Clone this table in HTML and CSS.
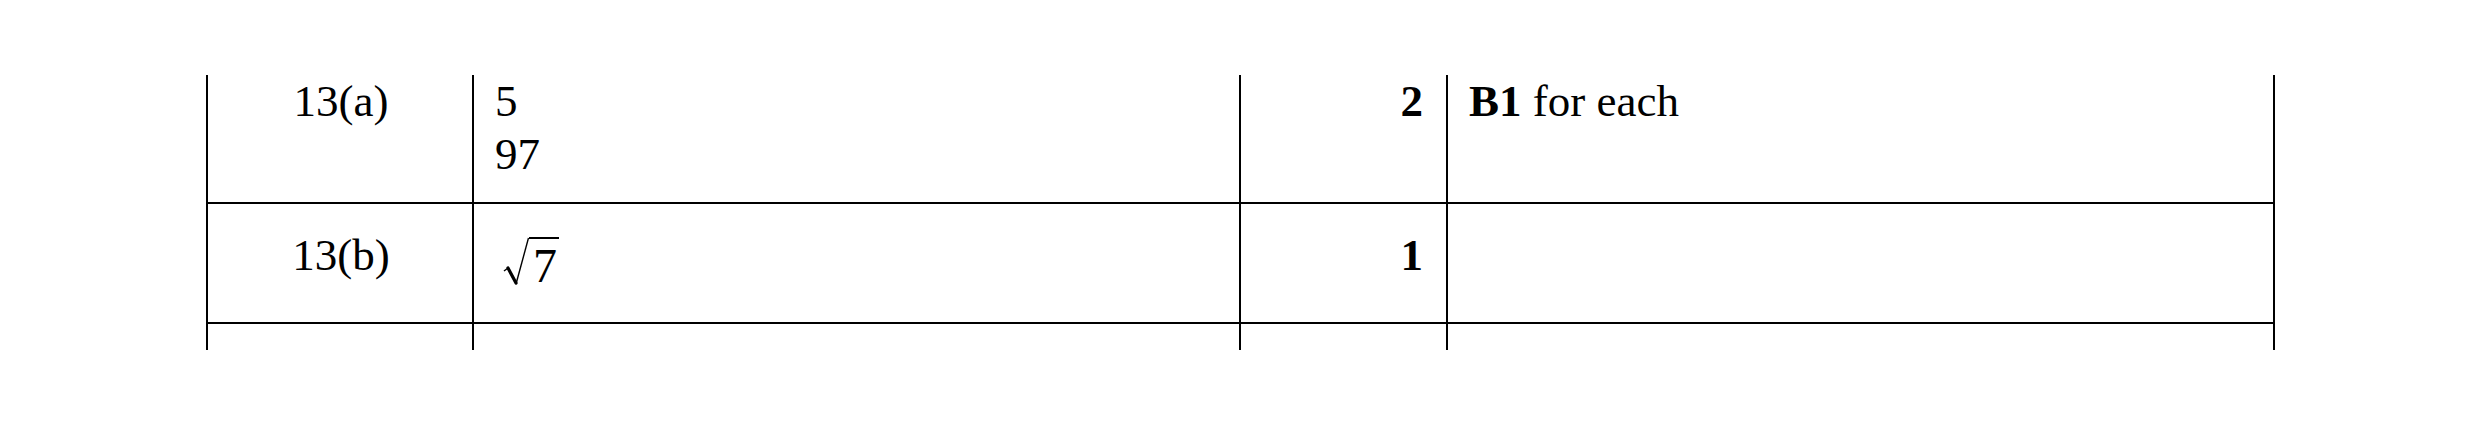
FILE: index.html
```html
<!DOCTYPE html>
<html lang="en">
<head>
<meta charset="utf-8">
<title>Mark scheme</title>
<link rel="stylesheet" href="styles.css">
</head>
<body>
<div class="table">
  <div class="row r1">
    <div class="cell c1">13(a)</div>
    <div class="cell c2">5<br>97</div>
    <div class="cell c3"><b>2</b></div>
    <div class="cell c4"><b>B1</b> for each</div>
  </div>
  <div class="row r2">
    <div class="cell c1">13(b)</div>
    <div class="cell c2">
      <span class="sqrt">
        <svg class="radical" width="26" height="49" viewBox="0 0 26 49">
          <path d="M1 34 L5 31" stroke="#000" stroke-width="1.4" fill="none"/>
          <path d="M5 31 L13 46" stroke="#000" stroke-width="3.2" fill="none" stroke-linecap="round"/>
          <path d="M13 47 L25.5 1" stroke="#000" stroke-width="1.4" fill="none"/>
        </svg><span class="radicand">7</span>
      </span>
    </div>
    <div class="cell c3"><b>1</b></div>
    <div class="cell c4"></div>
  </div>
  <div class="row r3">
    <div class="cell c1"></div>
    <div class="cell c2"></div>
    <div class="cell c3"></div>
    <div class="cell c4"></div>
  </div>
</div>
</body>
</html>
```

FILE: styles.css
```css
html, body {
  margin: 0;
  padding: 0;
  background: #fff;
}

body {
  font-family: "Liberation Serif", "Times New Roman", serif;
  font-size: 45px;
  line-height: 53px;
  color: #000;
}

.table {
  margin: 75px 0 0 206px;
  width: 2069px;
}

.row {
  display: grid;
  grid-template-columns: 266px 767px 207px 829px;
}

.r1 { height: 129px; }
.r2 { height: 120px; }
.r3 { height: 26px; }

.cell {
  box-sizing: border-box;
  border-left: 2px solid #000;
}

.r1 .cell,
.r2 .cell {
  border-bottom: 2px solid #000;
}

.c4 {
  border-right: 2px solid #000;
}

.r1 .cell { padding-top: 0; }
.r2 .cell { padding-top: 25px; }
.r3 .cell { padding-top: 0; }

.c1 {
  text-align: center;
  padding-left: 2px;
}

.c2 {
  padding-left: 21px;
}

.c3 {
  text-align: right;
  padding-right: 23px;
}

.c4 {
  padding-left: 21px;
}

.r2 .c2 {
  padding-top: 33px;
}

.sqrt {
  display: flex;
  align-items: flex-start;
  margin-left: 8px;
}

.radical {
  display: block;
  flex: none;
}

.radicand {
  display: block;
  border-top: 2px solid #000;
  padding: 0 2px 0 4px;
  font-size: 48px;
  line-height: 53px;
}
```
